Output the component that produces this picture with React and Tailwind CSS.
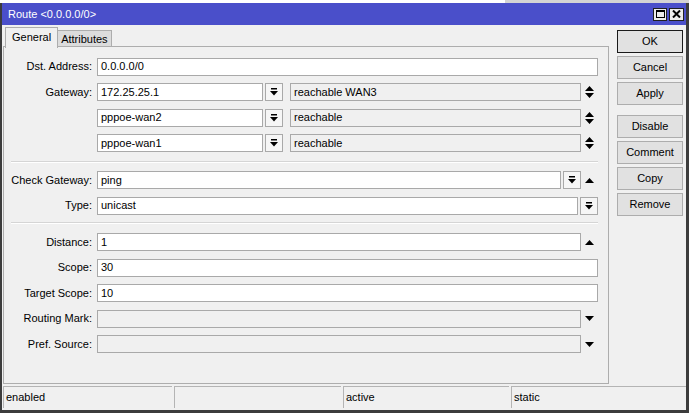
import React from "react";

const DropBtn = () => (
  <div className="w-[18px] h-[18px] border border-[#a9a9a9] bg-[#f6f6f6] flex items-center justify-center shrink-0">
    <svg width="8" height="8" viewBox="0 0 8 8">
      <rect x="1" y="0" width="6" height="1.5" fill="#000" />
      <path d="M0 3 H8 L4 7.5 Z" fill="#000" />
    </svg>
  </div>
);

const UpDown = () => (
  <div className="w-[17px] h-[18px] flex items-center justify-center shrink-0">
    <svg width="9" height="12" viewBox="0 0 9 12">
      <path d="M4.5 0 L9 5 H0 Z M0 7 H9 L4.5 12 Z" fill="#000" />
    </svg>
  </div>
);

const Up = () => (
  <div className="w-[17px] h-[18px] flex items-center justify-center shrink-0">
    <svg width="9" height="5" viewBox="0 0 9 5">
      <path d="M4.5 0 L9 5 H0 Z" fill="#000" />
    </svg>
  </div>
);

const Down = () => (
  <div className="w-[17px] h-[18px] flex items-center justify-center shrink-0">
    <svg width="9" height="5" viewBox="0 0 9 5">
      <path d="M0 0 H9 L4.5 5 Z" fill="#000" />
    </svg>
  </div>
);

const Input = ({ value, className = "", disabled = false }) => (
  <div
    className={
      "h-[18px] border border-[#a9a9a9] flex items-center pl-[3px] leading-none whitespace-nowrap overflow-hidden " +
      (disabled ? "bg-[#f0f0f0] " : "bg-white ") +
      className
    }
  >
    {value}
  </div>
);

const Row = ({ label, children }) => (
  <div className="flex items-center h-[18px]">
    <div className="w-[88px] text-right shrink-0 leading-none">{label}</div>
    <div className="flex items-center flex-1 ml-[5px] mr-[10px] min-w-0">{children}</div>
  </div>
);

const Sep = ({ className = "" }) => (
  <div className={"ml-[7px] mr-[10px] border-t border-[#d5d5d5] border-b border-b-white " + className} />
);

const Btn = ({ children, def = false, className = "" }) => (
  <div
    className={
      "h-[23px] w-[66px] flex items-center justify-center bg-[#e1e1e1] border leading-none " +
      (def ? "border-[#1a1a1a] " : "border-[#adadad] ") +
      className
    }
  >
    {children}
  </div>
);

export default function App() {
  return (
    <div className="w-[689px] h-[413px] overflow-hidden bg-white text-[11px] text-black font-['Liberation_Sans',Arial,sans-serif]">
      {/* background strip */}
      <div className="h-[3px] flex">
        <div className="w-[505px] bg-white" />
        <div className="flex-1 bg-[#d4d4d4]" />
      </div>
      <div className="h-[410px] flex flex-col bg-[#f0f0f0] border-l-2 border-r-[3px] border-b-[3px] border-[#3c3c3c]">
        {/* title bar */}
        <div className="h-[22px] bg-[#4a4fca] flex items-center justify-between pl-[6px] pr-[2px] shrink-0">
          <div className="text-white leading-none">Route &lt;0.0.0.0/0&gt;</div>
          <div className="flex gap-[2px]">
            <div className="w-[14px] h-[13px] bg-[#ececec] border border-[#202020] flex items-center justify-center">
              <svg width="9" height="8" viewBox="0 0 9 8">
                <rect x="0.5" y="0.5" width="8" height="7" fill="none" stroke="#000" strokeWidth="1" />
                <rect x="0" y="0" width="9" height="2" fill="#000" />
              </svg>
            </div>
            <div className="w-[15px] h-[13px] bg-[#ececec] border border-[#202020] flex items-center justify-center">
              <svg width="9" height="8" viewBox="0 0 9 8">
                <path d="M1 0.5 L8 7.5 M8 0.5 L1 7.5" stroke="#000" strokeWidth="2" />
              </svg>
            </div>
          </div>
        </div>

        {/* body */}
        <div className="h-[360px] flex shrink-0">
          <div className="ml-[1px] w-[606px] flex flex-col">
            {/* tabs */}
            <div className="mt-[2px] h-[20px] flex items-end pl-[2px] shrink-0">
              <div className="relative z-10 h-[21px] -mb-px px-[6px] pt-[4px] bg-[#f0f0f0] border border-b-0 border-[#adadad] leading-none">
                General
              </div>
              <div className="h-[17px] px-[3px] pt-[3px] bg-[#dcdcdc] border border-l-0 border-[#adadad] leading-none">
                Attributes
              </div>
            </div>
            {/* panel */}
            <div className="-mt-px h-[338px] border border-[#adadad] flex flex-col">
              <div className="mt-[10.5px] flex flex-col gap-[7.5px]">
                <Row label="Dst. Address:">
                  <Input value="0.0.0.0/0" className="flex-1" />
                </Row>
                <Row label="Gateway:">
                  <Input value="172.25.25.1" className="w-[166px] shrink-0" />
                  <div className="ml-[2px]"><DropBtn /></div>
                  <Input value="reachable WAN3" disabled className="flex-1 ml-[7px]" />
                  <UpDown />
                </Row>
                <Row label="">
                  <Input value="pppoe-wan2" className="w-[166px] shrink-0" />
                  <div className="ml-[2px]"><DropBtn /></div>
                  <Input value="reachable" disabled className="flex-1 ml-[7px]" />
                  <UpDown />
                </Row>
                <Row label="">
                  <Input value="pppoe-wan1" className="w-[166px] shrink-0" />
                  <div className="ml-[2px]"><DropBtn /></div>
                  <Input value="reachable" disabled className="flex-1 ml-[7px]" />
                  <UpDown />
                </Row>
              </div>
              <Sep className="mt-[8.5px]" />
              <div className="mt-[8.5px] flex flex-col gap-[7.5px]">
                <Row label="Check Gateway:">
                  <Input value="ping" className="flex-1" />
                  <div className="ml-[2px]"><DropBtn /></div>
                  <Up />
                </Row>
                <Row label="Type:">
                  <Input value="unicast" className="flex-1" />
                  <div className="ml-[2px]"><DropBtn /></div>
                </Row>
              </div>
              <Sep className="mt-[7.5px]" />
              <div className="mt-[9px] flex flex-col gap-[7.5px]">
                <Row label="Distance:">
                  <Input value="1" className="flex-1" />
                  <Up />
                </Row>
                <Row label="Scope:">
                  <Input value="30" className="flex-1" />
                </Row>
                <Row label="Target Scope:">
                  <Input value="10" className="flex-1" />
                </Row>
                <Row label="Routing Mark:">
                  <Input value="" disabled className="flex-1" />
                  <Down />
                </Row>
                <Row label="Pref. Source:">
                  <Input value="" disabled className="flex-1" />
                  <Down />
                </Row>
              </div>
            </div>
          </div>
          {/* buttons */}
          <div className="ml-[8px] mt-[5px] flex flex-col gap-[3px]">
            <Btn def>OK</Btn>
            <Btn>Cancel</Btn>
            <Btn>Apply</Btn>
            <Btn className="mt-[7px]">Disable</Btn>
            <Btn>Comment</Btn>
            <Btn>Copy</Btn>
            <Btn>Remove</Btn>
          </div>
        </div>

        {/* status bar */}
        <div className="h-[22px] flex gap-[2px] ml-[1px] mt-px shrink-0">
          <div className="w-[169px] border-t border-l border-[#b4b4b4] pl-[2px] pt-[5px] leading-none">enabled</div>
          <div className="w-[167px] border-t border-l border-[#b4b4b4]" />
          <div className="w-[166px] border-t border-l border-[#b4b4b4] pl-[2px] pt-[5px] leading-none">active</div>
          <div className="flex-1 border-t border-l border-[#b4b4b4] pl-[2px] pt-[5px] leading-none">static</div>
        </div>
      </div>
    </div>
  );
}
